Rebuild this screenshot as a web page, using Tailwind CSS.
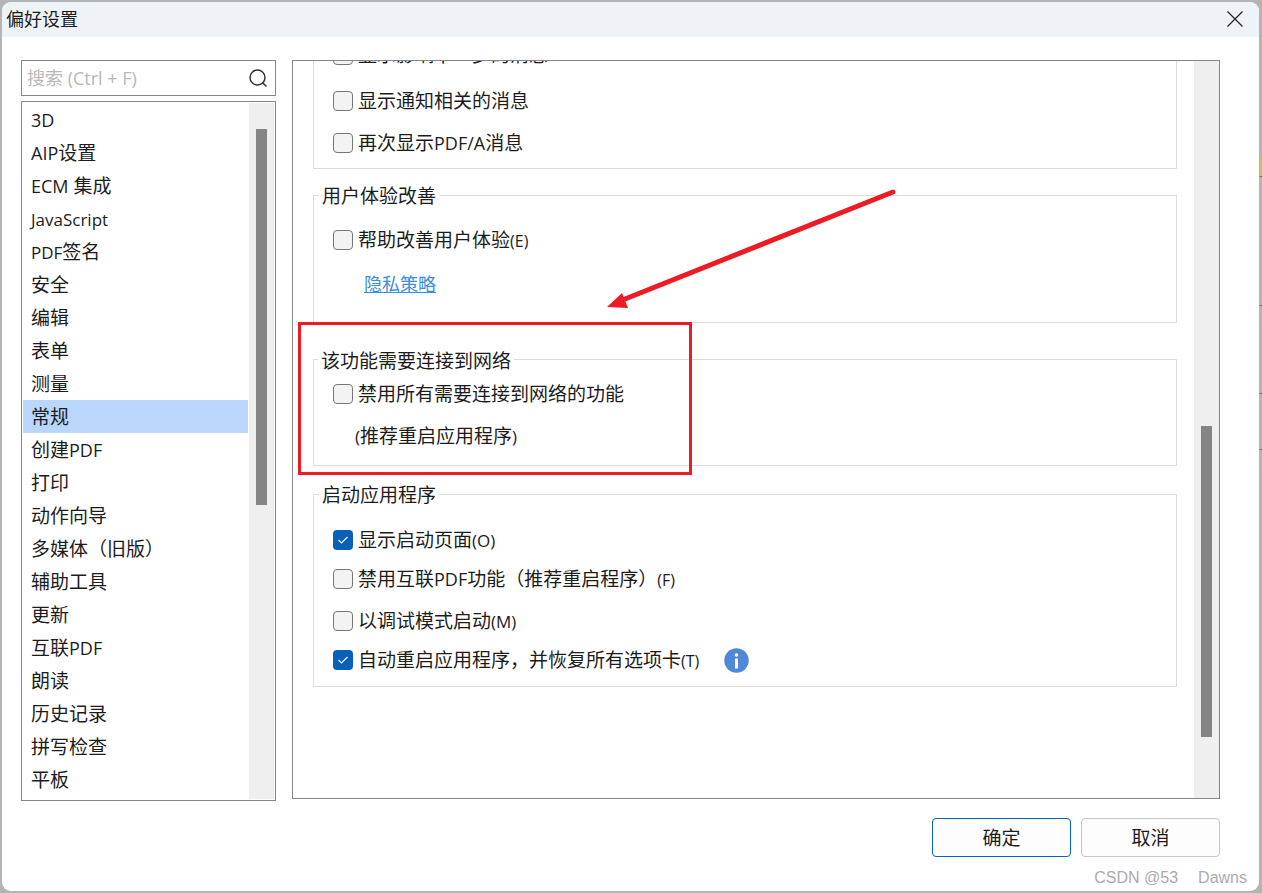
<!DOCTYPE html>
<html lang="zh-CN">
<head>
    <meta charset="UTF-8">
    <title>偏好设置</title>
    <script src="https://cdn.jsdelivr.net/npm/@tailwindcss/browser@4"></script>
</head>
<body class="relative w-[1262px] h-[893px] overflow-hidden bg-[#b4b4b4] pt-[2px] pl-[2px] font-['Open_Sans','Noto_Sans_CJK_SC',sans-serif] text-[19px] text-[#1c1c1c]">
    <!-- bits of the desktop showing past the window edge -->
    <div class="absolute right-0 top-[157px] w-[2px] h-[19px] bg-[#c9c06a]"></div>
    <div class="absolute right-0 top-[176px] w-[2px] h-[1px] bg-[#c8343c]"></div>
    <div class="absolute right-0 top-[305px] w-[2px] h-[1px] bg-[#c8343c]"></div>
    <div class="absolute right-0 top-[393px] w-[2px] h-[1px] bg-[#c8343c]"></div>
    <div class="absolute right-0 top-[449px] w-[2px] h-[1px] bg-[#c8343c]"></div>

    <div class="relative w-[1257px] h-[889px] bg-white rounded-[9px] overflow-hidden flex flex-col">
        <!-- title bar -->
        <div class="h-[35px] bg-[#eef3f8] flex items-center justify-between pl-[4px] pr-[16px] text-[18px]">
            <span>偏好设置</span>
            <svg class="mb-[2px]" width="16" height="16" viewBox="0 0 16 16" fill="none" stroke="#222" stroke-width="1.2"><path d="M0.5 0.5 15.5 15.5M15.5 0.5 0.5 15.5"/></svg>
        </div>

        <div class="flex gap-[16px] pl-[19px] pt-[23px]">
            <!-- left column -->
            <div class="w-[255px] flex flex-col gap-[5px]">
                <div class="h-[36px] border border-[#85878c] flex items-center justify-between pl-[5px] pr-[7px] text-[18px] text-[#b8b8b8]">
                    <span>搜索 (Ctrl + F)</span>
                    <svg width="20" height="20" viewBox="0 0 20 20" fill="none" stroke="#333" stroke-width="1.5"><circle cx="9.5" cy="9.5" r="7.5"/><path d="M15 15 18.5 18.5"/></svg>
                </div>
                <div class="h-[700px] border border-[#85878c] p-[1px] flex">
                    <ul class="flex-1 overflow-hidden">
                        <li class="h-[33px] pl-[8px] leading-[35px]"><span class="text-[18px]">3D</span></li>
                        <li class="h-[33px] pl-[8px] leading-[35px]"><span class="text-[18px]">AIP</span>设置</li>
                        <li class="h-[33px] pl-[8px] leading-[35px]"><span class="text-[18px]">ECM</span> 集成</li>
                        <li class="h-[33px] pl-[8px] leading-[35px]"><span class="text-[17px]">JavaScript</span></li>
                        <li class="h-[33px] pl-[8px] leading-[35px]"><span class="text-[17px]">PDF</span>签名</li>
                        <li class="h-[33px] pl-[8px] leading-[35px]">安全</li>
                        <li class="h-[33px] pl-[8px] leading-[35px]">编辑</li>
                        <li class="h-[33px] pl-[8px] leading-[35px]">表单</li>
                        <li class="h-[33px] pl-[8px] leading-[35px]">测量</li>
                        <li class="h-[33px] pl-[8px] leading-[35px] bg-[#b9d6fd]">常规</li>
                        <li class="h-[33px] pl-[8px] leading-[35px]">创建<span class="text-[18px]">PDF</span></li>
                        <li class="h-[33px] pl-[8px] leading-[35px]">打印</li>
                        <li class="h-[33px] pl-[8px] leading-[35px]">动作向导</li>
                        <li class="h-[33px] pl-[8px] leading-[35px]">多媒体（旧版）</li>
                        <li class="h-[33px] pl-[8px] leading-[35px]">辅助工具</li>
                        <li class="h-[33px] pl-[8px] leading-[35px]">更新</li>
                        <li class="h-[33px] pl-[8px] leading-[35px]">互联<span class="text-[18px]">PDF</span></li>
                        <li class="h-[33px] pl-[8px] leading-[35px]">朗读</li>
                        <li class="h-[33px] pl-[8px] leading-[35px]">历史记录</li>
                        <li class="h-[33px] pl-[8px] leading-[35px]">拼写检查</li>
                        <li class="h-[33px] pl-[8px] leading-[35px]">平板</li>
                    </ul>
                    <div class="w-[25px] ml-[1px] bg-[#efefef] pt-[26px] pl-[7px]">
                        <div class="w-[11px] h-[376px] bg-[#858585]"></div>
                    </div>
                </div>
            </div>

            <!-- right panel -->
            <div class="w-[928px] h-[739px] border border-[#85878c] flex overflow-hidden">
                <div class="flex-1 pl-[20px] pr-[17px] -mt-[41px]">
                    <div class="relative border border-[#dcdcdc] pt-[24px] pb-[15px] pl-[19px]">
                        <label class="h-[20px] flex items-center gap-[5px]"><span class="w-[20px] h-[20px] bg-[#f3f3f3] border border-[#777] rounded-[4px]"></span><span class="pt-[1px]">显示影响下一步的消息</span></label>
                        <label class="h-[20px] flex items-center gap-[5px] mt-[26px]"><span class="w-[20px] h-[20px] bg-[#f3f3f3] border border-[#777] rounded-[4px]"></span><span class="pt-[1px]">显示通知相关的消息</span></label>
                        <label class="h-[20px] flex items-center gap-[5px] mt-[22px]"><span class="w-[20px] h-[20px] bg-[#f3f3f3] border border-[#777] rounded-[4px]"></span><span class="pt-[1px]">再次显示<span class="text-[18px]">PDF/A</span>消息</span></label>
                    </div>

                    <div class="relative border border-[#dcdcdc] mt-[26px] pt-[34px] pb-[26px] pl-[19px]">
                        <span class="absolute left-[5px] -top-[13px] h-[26px] leading-[26px] px-[3px] bg-white">用户体验改善</span>
                        <label class="h-[20px] flex items-center gap-[5px]"><span class="w-[20px] h-[20px] bg-[#f3f3f3] border border-[#777] rounded-[4px]"></span><span>帮助改善用户体验<span class="text-[16px]">(E)</span></span></label>
                        <a href="#" class="block h-[24px] leading-[24px] mt-[22px] ml-[31px] text-[18px] text-[#3a8ee0] underline">隐私策略</a>
                    </div>

                    <div class="relative border border-[#dcdcdc] mt-[36px] pt-[24px] pb-[17px] pl-[19px]">
                        <span class="absolute left-[4px] -top-[12px] h-[26px] leading-[26px] px-[3px] bg-white">该功能需要连接到网络</span>
                        <label class="h-[20px] flex items-center gap-[5px]"><span class="w-[20px] h-[20px] bg-[#f3f3f3] border border-[#777] rounded-[4px]"></span><span>禁用所有需要连接到网络的功能</span></label>
                        <p class="h-[24px] leading-[24px] mt-[20px] ml-[22px]"><span class="text-[17px]">(</span>推荐重启应用程序<span class="text-[17px]">)</span></p>
                    </div>

                    <div class="relative border border-[#dcdcdc] mt-[28px] pt-[35px] pb-[16px] pl-[19px]">
                        <span class="absolute left-[5px] -top-[13px] h-[26px] leading-[26px] px-[3px] bg-white">启动应用程序</span>
                        <label class="h-[20px] flex items-center gap-[5px]">
                            <span class="w-[20px] h-[20px] bg-[#0a5fb8] rounded-[4px] flex items-center justify-center"><svg width="12" height="10" viewBox="0 0 12 10" fill="none" stroke="#fff" stroke-width="1.1"><path d="M1.5 5 4.5 8 10.5 2"/></svg></span><span class="pt-[1px]">显示启动页面<span class="text-[17px]">(O)</span></span>
                        </label>
                        <label class="h-[20px] flex items-center gap-[5px] mt-[19px]"><span class="w-[20px] h-[20px] bg-[#f3f3f3] border border-[#777] rounded-[4px]"></span><span class="pt-[1px]">禁用互联<span class="text-[18px]">PDF</span>功能（推荐重启程序）<span class="text-[16px]">(F)</span></span></label>
                        <label class="h-[20px] flex items-center gap-[5px] mt-[22px]"><span class="w-[20px] h-[20px] bg-[#f3f3f3] border border-[#777] rounded-[4px]"></span><span class="pt-[1px]">以调试模式启动<span class="text-[17px]">(M)</span></span></label>
                        <label class="h-[20px] flex items-center gap-[5px] mt-[19px]">
                            <span class="w-[20px] h-[20px] bg-[#0a5fb8] rounded-[4px] flex items-center justify-center"><svg width="12" height="10" viewBox="0 0 12 10" fill="none" stroke="#fff" stroke-width="1.1"><path d="M1.5 5 4.5 8 10.5 2"/></svg></span><span class="pt-[1px]">自动重启应用程序，并恢复所有选项卡<span class="text-[16px]">(T)</span></span>
                            <svg class="ml-[20px]" width="25" height="25" viewBox="0 0 25 25"><circle cx="12.500" cy="12.500" r="12.200" fill="#4f88d9"/><circle cx="12.500" cy="7" r="1.800" fill="#fff"/><rect x="11" y="10.500" width="3" height="10" fill="#fff"/></svg>
                        </label>
                    </div>
                </div>
                <div class="w-[25px] bg-[#efefef] pt-[365px] pl-[7px]">
                    <div class="w-[11px] h-[311px] bg-[#858585]"></div>
                </div>
            </div>
        </div>

        <!-- buttons -->
        <div class="flex justify-end gap-[10px] mt-[17px] pr-[39px]">
            <button class="w-[139px] h-[39px] pt-[2px] bg-[#fdfdfd] border border-[#0067c0] rounded-[4px]">确定</button>
            <button class="w-[139px] h-[39px] pt-[2px] bg-[#fdfdfd] border border-[#c6c6c6] rounded-[4px]">取消</button>
        </div>

        <!-- watermark -->
        <div class="flex justify-end gap-[20px] pr-[12px] mt-[11px] font-['Liberation_Sans',sans-serif] text-[16px] leading-[20px] text-[#ababab]"><span>CSDN @53</span><span>Dawns</span></div>

        <!-- annotations drawn over the dialog -->
        <div class="absolute left-[296px] top-[320px] w-[394px] h-[153px] border-[3px] border-[#ed1c24]"></div>
        <svg class="absolute left-0 top-0" width="1257" height="889" fill="#ed1c24">
            <path d="M891 190 618 299" fill="none" stroke="#ed1c24" stroke-width="5" stroke-linecap="round"/>
            <path d="M605 305 620 291 626 306Z"/>
        </svg>
    </div>
</body>
</html>
